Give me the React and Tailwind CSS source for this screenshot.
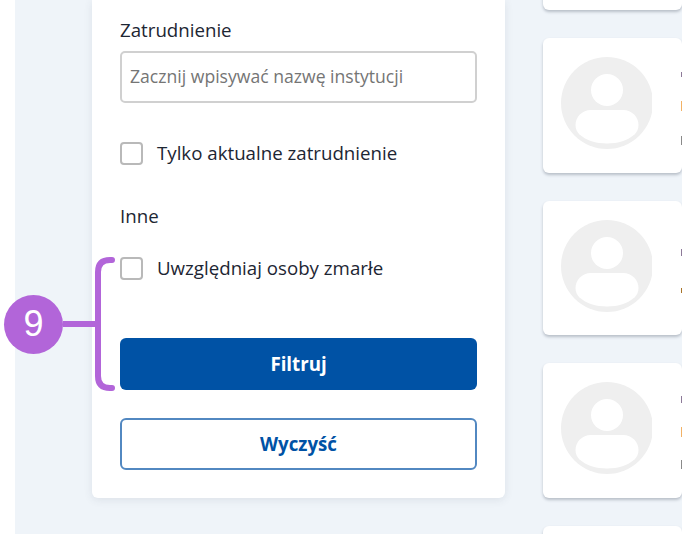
const font = { fontFamily: '"Open Sans", sans-serif' };

function Avatar() {
  return (
    <svg width="91" height="92" viewBox="0 0 91 92" className="mt-[19px] shrink-0">
      <circle cx="46" cy="46" r="46" fill="#efefef" />
      <circle cx="46" cy="33" r="16" fill="#ffffff" />
      <path d="M30 53h32c9 0 15.5 7 15.5 15 0 4-1.5 7-4 9.5-7 6-16 9-27.5 9s-20.5-3-27.5-9c-2.5-2.5-4-5.5-4-9.5 0-8 6.5-15 15.5-15z" fill="#ffffff" />
    </svg>
  );
}

function PersonCard({ height, children }) {
  return (
    <div className={`flex ${height} items-start overflow-hidden rounded-md bg-white pl-[18px] shadow-[0_2px_3px_rgba(60,70,90,0.3)]`}>
      <Avatar />
      <div className="ml-[29px] flex w-[1px] flex-col">{children}</div>
    </div>
  );
}

function Checkbox() {
  return <span className="block h-[23px] w-[23px] shrink-0 rounded-[4px] border-2 border-[#b9b9b9] bg-white" />;
}

export default function App() {
  return (
    <div className="flex h-[534px] w-[682px] overflow-hidden bg-white text-[#1d2633]" style={font}>
      <div className="w-[15px] shrink-0" />
      <div className="relative flex h-full flex-1 items-start bg-[#eff4f9] pl-[77px]">
        <aside className="h-[498px] w-[413px] shrink-0 rounded-b-md bg-white px-[28px] pt-[18px] shadow-[0_2px_8px_rgba(60,70,90,0.1)]">
          <label className="block text-[18.7px] leading-[24px]">Zatrudnienie</label>
          <input
            readOnly
            placeholder="Zacznij wpisywać nazwę instytucji"
            className="mt-[9px] block h-[52px] w-full rounded-[5px] border-2 border-[#d0d0d0] px-[8px] pb-[2px] text-[17.6px] placeholder:text-[#757575] focus:outline-none"
          />
          <div className="mt-[38px] flex items-center gap-[14px]">
            <Checkbox />
            <span className="text-[18.7px] leading-[24px]">Tylko aktualne zatrudnienie</span>
          </div>
          <p className="mt-[39px] text-[18.7px] leading-[24px]">Inne</p>
          <div className="mt-[28px] flex items-center gap-[14px]">
            <Checkbox />
            <span className="text-[18.7px] leading-[24px]">Uwzględniaj osoby zmarłe</span>
          </div>
          <button className="mt-[58px] block h-[52px] w-full rounded-[6px] bg-[#0052a5] text-[18.7px] font-bold text-white">Filtruj</button>
          <button className="mt-[28px] block h-[52px] w-full rounded-[6px] border-2 border-[#5288c1] bg-white text-[18.7px] font-bold text-[#0052a5]">Wyczyść</button>
        </aside>

        <main className="ml-[38px] flex min-w-0 flex-1 -translate-y-[125px] flex-col gap-[28px]">
          <div className="h-[135px] shrink-0 rounded-md bg-white shadow-[0_2px_3px_rgba(60,70,90,0.3)]" />
          <PersonCard height="h-[135px]">
            <span className="mt-[34px] h-[5px] bg-[#8d7a99]" />
            <span className="mt-[24px] h-[10px] bg-[#f2b266]" />
            <span className="mt-[25px] h-[9px] bg-[#8a8a8a]" />
          </PersonCard>
          <PersonCard height="h-[134px]">
            <span className="mt-[48px] h-[7px] bg-[#8d7a99]" />
            <span className="mt-[32px] h-[5px] bg-[#a8742a]" />
          </PersonCard>
          <PersonCard height="h-[135px]">
            <span className="mt-[33px] h-[7px] bg-[#8d7a99]" />
            <span className="mt-[24px] h-[10px] bg-[#f2b266]" />
            <span className="mt-[23px] h-[9px] bg-[#8a8a8a]" />
          </PersonCard>
          <div className="h-[135px] shrink-0 rounded-md bg-white shadow-[0_2px_3px_rgba(60,70,90,0.3)]" />
        </main>

        <div className="absolute left-[-11px] top-[257px] flex items-center">
          <div className="flex h-[59px] w-[59px] items-center justify-center rounded-full bg-[#b265d9] text-[36px] leading-none text-white" style={{ fontFamily: '"Liberation Sans", sans-serif' }}>9</div>
          <div className="h-[6px] w-[33px] bg-[#b265d9]" />
          <svg width="20" height="134" viewBox="0 0 20 134" fill="none" className="-ml-px">
            <path d="M17 3H15Q3 3 3 15V119Q3 131 15 131H17" stroke="#b265d9" strokeWidth="6" strokeLinecap="round" />
          </svg>
        </div>
      </div>
    </div>
  );
}
